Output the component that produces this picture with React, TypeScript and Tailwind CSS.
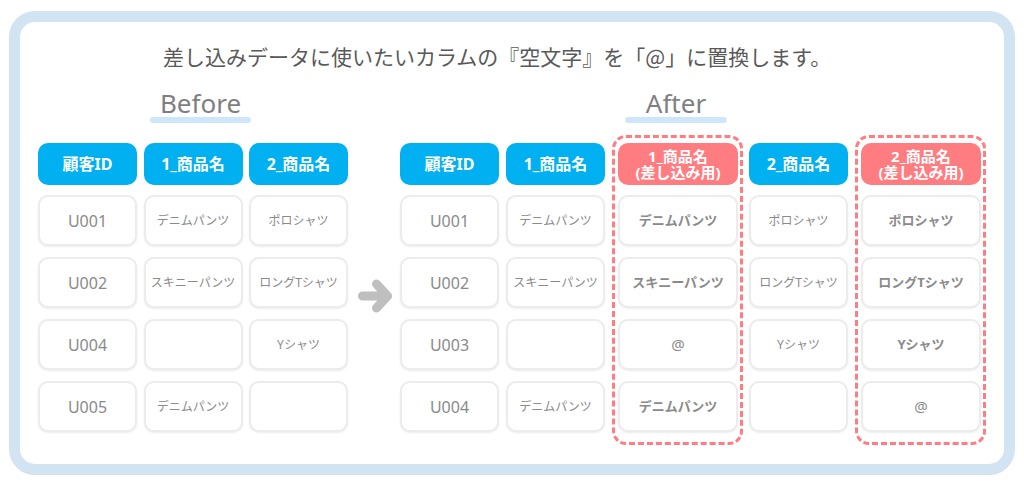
import React from "react";

const font = "font-['Noto_Sans','Noto_Sans_CJK_JP',sans-serif]";

const HeadBlue = ({ label }: { label: string }) => (
  <div className="h-[42px] w-[99px] rounded-[10px] bg-[#00b0f0] flex items-center justify-center text-white font-bold text-[16px]">
    {label}
  </div>
);

const HeadPink = ({ label }: { label: string }) => (
  <div className="h-[42px] w-[120px] rounded-[10px] bg-[#ff7c80] flex items-center justify-center text-center text-white font-bold text-[15px] leading-[16px]">
    <p>
      {label}
      <br />
      (差し込み用)
    </p>
  </div>
);

const Cell = ({ text, wide, bold }: { text: string; wide?: boolean; bold?: boolean }) => {
  const isId = /^U\d+$/.test(text);
  const isAt = text === "@";
  return (
    <div
      className={
        "h-[51px] rounded-[10px] border-2 border-[#ececec] bg-white shadow-[0_1px_2px_rgba(0,0,0,0.08)] flex items-center justify-center text-[#8a8a8a] " +
        (wide ? "w-[120px] " : "w-[99px] ") +
        (isId ? "text-[16px] " : isAt ? "text-[15px] " : bold ? "text-[13px] " : "text-[12px] ") +
        (bold && !isAt ? "font-bold text-[#7a7a7a]" : "")
      }
    >
      {text}
    </div>
  );
};

const Column = ({ head, cells }: { head: string; cells: string[] }) => (
  <div className="flex flex-col pt-[8px]">
    <HeadBlue label={head} />
    <div className="mt-[10px] flex flex-col gap-[11px]">
      {cells.map((c, i) => (
        <Cell key={i} text={c} />
      ))}
    </div>
  </div>
);

// 差し込み用の列は赤い点線で囲む
const MergeColumn = ({ head, cells }: { head: string; cells: string[] }) => (
  <div className="flex flex-col w-[131px] h-[310px] border-[3px] border-dashed border-[#ff7c80] rounded-[14px] pt-[5px] pl-[3px]">
    <HeadPink label={head} />
    <div className="mt-[10px] flex flex-col gap-[11px]">
      {cells.map((c, i) => (
        <Cell key={i} text={c} wide bold />
      ))}
    </div>
  </div>
);

const Label = ({ text, width, className }: { text: string; width: string; className: string }) => (
  <div className={"flex flex-col items-center " + width + " " + className}>
    <span className="text-[26px] leading-[26px] text-[#7f7f7f] font-['Noto_Sans',sans-serif]">{text}</span>
    <div className="mt-[1px] h-[6px] w-full rounded-full bg-[#cfe6fa]" />
  </div>
);

const App: React.FC = () => {
  return (
    <div className={"w-[1024px] h-[485px] bg-white pl-[9px] pt-[11px] " + font}>
      <div className="w-[1006px] h-[464px] rounded-[26px] border-[11px] border-[#d2e3f2] bg-white flex flex-col">
        {/* タイトル */}
        <div className="mt-[19px] ml-[143px] text-[21px] leading-[30px] text-[#595959] font-['Noto_Sans_CJK_JP',sans-serif]">
          差し込みデータに使いたいカラムの『空文字』を「@」に置換します。
        </div>

        {/* Before / After */}
        <div className="mt-[19px] flex">
          <Label text="Before" width="w-[101px]" className="ml-[130px]" />
          <Label text="After" width="w-[102px]" className="ml-[374px]" />
        </div>

        {/* テーブル */}
        <div className="mt-[12px] ml-[18px] flex items-start">
          <div className="flex gap-[6.5px]">
            <Column head="顧客ID" cells={["U001", "U002", "U004", "U005"]} />
            <Column head="1_商品名" cells={["デニムパンツ", "スキニーパンツ", "", "デニムパンツ"]} />
            <Column head="2_商品名" cells={["ポロシャツ", "ロングTシャツ", "Yシャツ", ""]} />
          </div>

          <div className="ml-[10px] mr-[8px] mt-[144px]">
            <svg width="34" height="34" viewBox="0 0 34 34" fill="none">
              <path
                d="M4.5 17 H28 M18.5 5 L29.5 17 L18.5 29"
                stroke="#bfbfbf"
                strokeWidth="9"
                strokeLinecap="round"
                strokeLinejoin="round"
              />
            </svg>
          </div>

          <div className="flex items-start">
            <Column head="顧客ID" cells={["U001", "U002", "U003", "U004"]} />
            <div className="ml-[7px]">
              <Column head="1_商品名" cells={["デニムパンツ", "スキニーパンツ", "", "デニムパンツ"]} />
            </div>
            <div className="ml-[7px]">
              <MergeColumn head="1_商品名" cells={["デニムパンツ", "スキニーパンツ", "@", "デニムパンツ"]} />
            </div>
            <div className="ml-[6px]">
              <Column head="2_商品名" cells={["ポロシャツ", "ロングTシャツ", "Yシャツ", ""]} />
            </div>
            <div className="ml-[7px]">
              <MergeColumn head="2_商品名" cells={["ポロシャツ", "ロングTシャツ", "Yシャツ", "@"]} />
            </div>
          </div>
        </div>
      </div>
    </div>
  );
};

export default App;
